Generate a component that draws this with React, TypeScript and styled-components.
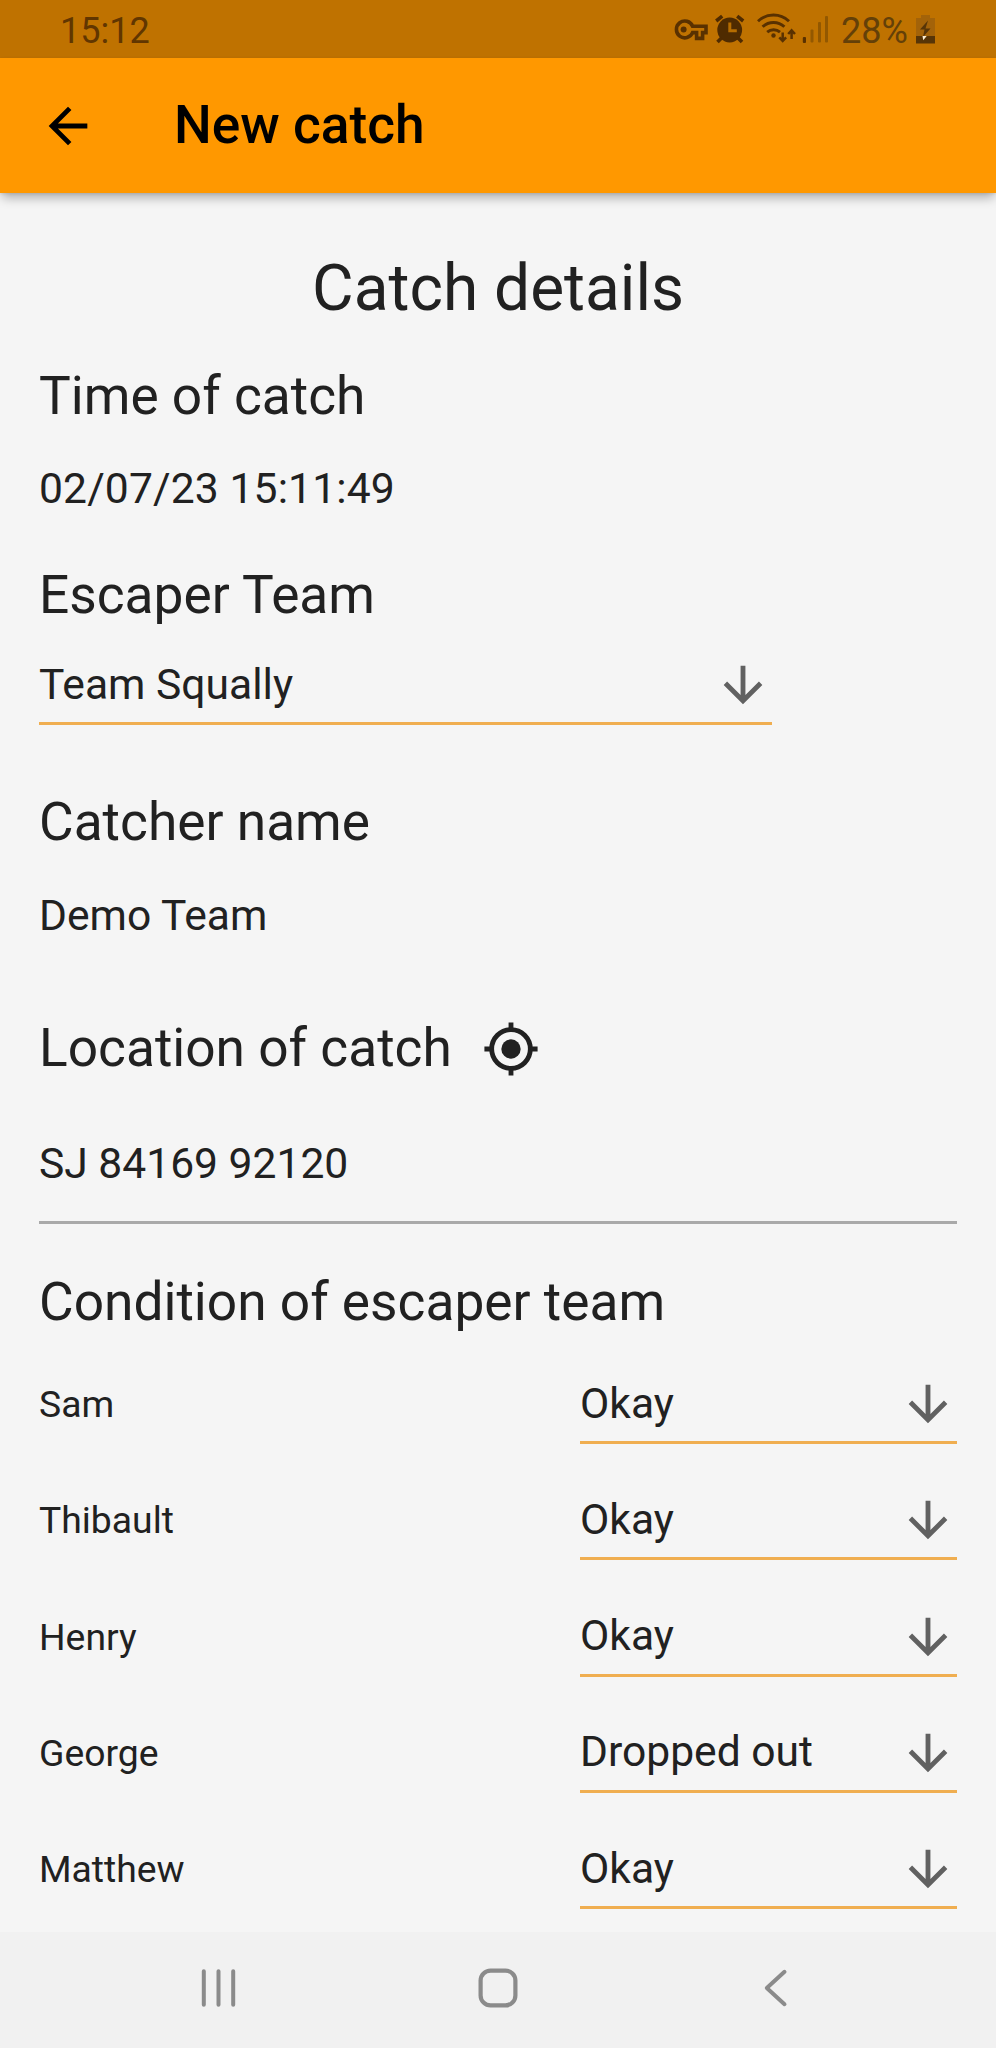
import React from 'react';
import styled, { createGlobalStyle } from 'styled-components';

const GlobalStyle = createGlobalStyle`
  *, *::before, *::after { box-sizing: border-box; }
  html, body { margin: 0; background: #f5f5f5; }
  body { font-family: Roboto, "Liberation Sans", sans-serif; color: #212121; }
`;

const Screen = styled.div`
  display: flex;
  flex-direction: column;
  width: 996px;
  height: 2048px;
  overflow: hidden;
  background: #f5f5f5;
`;

const StatusBar = styled.header`
  display: flex;
  justify-content: space-between;
  height: 58px;
  padding: 9px 61px 0 60px;
  background: #bf7200;
  flex: none;
`;

const StatusText = styled.span<{ $color: string }>`
  font-size: 36px;
  line-height: 45px;
  color: ${({ $color }) => $color};
`;

const StatusIcons = styled.div`
  display: flex;
  height: 43px;
`;

const StatusGlyph = styled.svg<{ $gap?: number }>`
  flex: none;
  display: block;
  margin-left: ${({ $gap = 0 }) => $gap}px;
`;

const Percent = styled(StatusText)`
  width: 66px;
  margin-left: 13px;
  white-space: nowrap;
`;

const AppBar = styled.div`
  position: relative;
  display: flex;
  align-items: center;
  flex: none;
  height: 135px;
  padding-left: 39px;
  gap: 77px;
  background: #ff9800;
  color: #000;
  box-shadow: 0 7px 10px -2px rgba(0, 0, 0, 0.28), 0 1px 3px rgba(0, 0, 0, 0.1);
`;

const BarTitle = styled.h1`
  margin: 0;
  font-size: 53.25px;
  font-weight: 500;
  line-height: 64px;
  padding-bottom: 1px;
`;

const Content = styled.main`
  flex: 1;
  min-height: 0;
  display: flex;
  flex-direction: column;
  padding: 58px 39px 0;
`;

const PageHeading = styled.h2`
  margin: 0 0 37px;
  font-size: 64px;
  font-weight: 400;
  line-height: 76px;
  text-align: center;
`;

const Section = styled.section<{ $space: number }>`
  margin-bottom: ${({ $space }) => $space}px;
`;

const SectionHeading = styled.h3`
  margin: 0;
  font-size: 53.25px;
  font-weight: 400;
  line-height: 64px;
`;

const HeadingRow = styled.div`
  display: flex;
  align-items: center;
  gap: 30px;
`;

const Value = styled.p<{ $top: number; $tracking?: number }>`
  margin: ${({ $top }) => $top}px 0 0;
  font-size: 42.6px;
  line-height: 50px;
  letter-spacing: ${({ $tracking = 0 }) => $tracking}px;
`;

const Select = styled.div<{ $width: number; $top?: number }>`
  display: flex;
  align-items: center;
  justify-content: space-between;
  flex: none;
  width: ${({ $width }) => $width}px;
  height: 69px;
  margin-top: ${({ $top = 0 }) => $top}px;
  padding-bottom: 8px;
  border-bottom: 3px solid #f0ae50;
  font-size: 42.6px;
  line-height: 50px;
`;

const SelectLabel = styled.span`
  padding-bottom: 3px;
`;

const Divider = styled.hr`
  width: 100%;
  height: 3px;
  margin: 33px 0 0;
  border: 0;
  background: #a9a9a9;
`;

const MemberList = styled.ul`
  list-style: none;
  margin: 0;
  padding: 41px 0 0;
`;

const Member = styled.li`
  display: flex;
  justify-content: space-between;
  height: 116.25px;
`;

const MemberName = styled.span`
  margin-top: 7px;
  font-size: 37.3px;
  line-height: 44px;
`;

const NavBar = styled.nav`
  display: flex;
  align-items: center;
  justify-content: space-between;
  flex: none;
  height: 116px;
  padding: 0 191px 4px 190px;
  background: #f1f1f1;
`;

const Icon = styled.svg`
  display: block;
  flex: none;
`;

const HeadingIcon = styled(Icon)`
  margin-top: 2px;
`;

function BackArrow() {
  return (
    <Icon width="58" height="58" viewBox="0 0 24 24" fill="currentColor">
      <path d="M20 11H7.83l5.59-5.59L12 4l-8 8 8 8 1.41-1.41L7.83 13H20v-2z" />
    </Icon>
  );
}

function DownArrow() {
  return (
    <Icon width="58" height="58" viewBox="0 0 24 24" fill="#616161">
      <path d="M20 12l-1.41-1.41L13 16.17V4h-2v12.17l-5.58-5.59L4 12l8 8 8-8z" />
    </Icon>
  );
}

function LocationIcon() {
  return (
    <HeadingIcon width="58" height="58" viewBox="0 0 24 24" fill="none" stroke="#212121" strokeWidth="2">
      <circle cx="12" cy="12" r="8" />
      <path d="M12 1v3M12 20v3M1 12h3M20 12h3" />
      <circle cx="12" cy="12" r="4" fill="#212121" stroke="none" />
    </HeadingIcon>
  );
}

function KeyIcon() {
  return (
    <StatusGlyph width="36" height="43" viewBox="0 0 36 43" fill="none" stroke="#593100" strokeWidth="3.6">
      <path d="M19.6 17.2H33v6.4h-3.4v5.8h-6v-5.8h-4A8.4 8.4 0 1 1 19.6 17.2Z" />
      <circle cx="10.6" cy="20.4" r="3" fill="#593100" stroke="none" />
    </StatusGlyph>
  );
}

function AlarmIcon() {
  return (
    <StatusGlyph $gap={6} width="30" height="43" viewBox="0 0 30 43" fill="none" stroke="#4f2b00">
      <circle cx="14.7" cy="21" r="12.4" fill="#4f2b00" stroke="none" />
      <path d="M1.2 12 7.2 7.2M22.2 7.2l6 4.8" strokeWidth="3.6" />
      <path d="m6.5 29-4 4M23 29l4 4" strokeWidth="3.6" />
      <path d="M14.8 13.5v8.3h7" stroke="#b66d00" strokeWidth="3" />
    </StatusGlyph>
  );
}

function WifiIcon() {
  return (
    <StatusGlyph $gap={12} width="40" height="43" viewBox="0 0 40 43" fill="none" stroke="#593100" strokeWidth="2.9">
      <path d="M1 12.2a22.5 22.5 0 0 1 31 0M5.6 17.8a15.8 15.8 0 0 1 21.8 0M10.2 23.2a9.6 9.6 0 0 1 12.8 0" />
      <circle cx="16.5" cy="26.5" r="2.2" fill="#593100" stroke="none" />
      <path d="M25.7 23.5v8M22.3 28.3l3.4 3.7 3.4-3.7M34.6 30v-8M31.2 25l3.4-3.7L38 25" strokeWidth="2.5" />
    </StatusGlyph>
  );
}

function SignalIcon() {
  return (
    <StatusGlyph $gap={5} width="26" height="43" viewBox="0 0 26 43" fill="#935800">
      <rect x="0.8" y="28" width="3.2" height="6" rx="1" fill="#593100" />
      <rect x="8.5" y="20.5" width="3" height="13" rx="1" />
      <rect x="16" y="13" width="3" height="20.5" rx="1" />
      <rect x="23" y="7" width="3" height="26.5" rx="1" />
    </StatusGlyph>
  );
}

function BatteryIcon() {
  return (
    <StatusGlyph $gap={9} width="19" height="43" viewBox="0 0 19 43">
      <path d="M5 6h9v3h5v18H0V9h5Z" fill="#a36309" />
      <path d="M0 27h19v7.5H0Z" fill="#573507" />
      <path d="m12 11.5-8 9h4.5L7 28l7.5-8.5h-5Z" fill="#573507" />
      <path d="m6.5 27h4.2l-3.5 4.3Z" fill="#fff0d2" />
    </StatusGlyph>
  );
}

function RecentsIcon() {
  return (
    <Icon width="58" height="58" viewBox="0 0 58 58" stroke="#8b8b8b" strokeWidth="4" strokeLinecap="round">
      <path d="M13.8 12.2v33.6M28.5 12.2v33.6M43.2 12.2v33.6" />
    </Icon>
  );
}

function HomeIcon() {
  return (
    <Icon width="58" height="58" viewBox="0 0 58 58" fill="none" stroke="#8b8b8b" strokeWidth="4.2">
      <rect x="11.6" y="11.6" width="34.8" height="34.8" rx="10" />
    </Icon>
  );
}

function NavBackIcon() {
  return (
    <Icon width="58" height="58" viewBox="0 0 58 58" fill="none" stroke="#8b8b8b" strokeWidth="4" strokeLinecap="round" strokeLinejoin="round">
      <path d="M37.5 12.8 19.8 29l17.7 16.2" />
    </Icon>
  );
}

const members = [
  { name: 'Sam', condition: 'Okay' },
  { name: 'Thibault', condition: 'Okay' },
  { name: 'Henry', condition: 'Okay' },
  { name: 'George', condition: 'Dropped out' },
  { name: 'Matthew', condition: 'Okay' },
];

export default function App() {
  return (
    <>
      <GlobalStyle />
      <Screen>
        <StatusBar>
          <StatusText $color="#613600">15:12</StatusText>
          <StatusIcons>
            <KeyIcon />
            <AlarmIcon />
            <WifiIcon />
            <SignalIcon />
            <Percent $color="#644008">28%</Percent>
            <BatteryIcon />
          </StatusIcons>
        </StatusBar>
        <AppBar>
          <BackArrow />
          <BarTitle>New catch</BarTitle>
        </AppBar>
        <Content>
          <PageHeading>Catch details</PageHeading>
          <Section $space={50}>
            <SectionHeading>Time of catch</SectionHeading>
            <Value $top={35} $tracking={0.13}>02/07/23 15:11:49</Value>
          </Section>
          <Section $space={65}>
            <SectionHeading>Escaper Team</SectionHeading>
            <Select $width={733} $top={29}>
              <SelectLabel>Team Squally</SelectLabel>
              <DownArrow />
            </Select>
          </Section>
          <Section $space={76}>
            <SectionHeading>Catcher name</SectionHeading>
            <Value $top={36}>Demo Team</Value>
          </Section>
          <Section $space={46}>
            <HeadingRow>
              <SectionHeading>Location of catch</SectionHeading>
              <LocationIcon />
            </HeadingRow>
            <Value $top={58}>SJ 84169 92120</Value>
            <Divider />
          </Section>
          <Section $space={0}>
            <SectionHeading>Condition of escaper team</SectionHeading>
            <MemberList>
              {members.map(({ name, condition }) => (
                <Member key={name}>
                  <MemberName>{name}</MemberName>
                  <Select $width={377}>
                    <SelectLabel>{condition}</SelectLabel>
                    <DownArrow />
                  </Select>
                </Member>
              ))}
            </MemberList>
          </Section>
        </Content>
        <NavBar>
          <RecentsIcon />
          <HomeIcon />
          <NavBackIcon />
        </NavBar>
      </Screen>
    </>
  );
}
